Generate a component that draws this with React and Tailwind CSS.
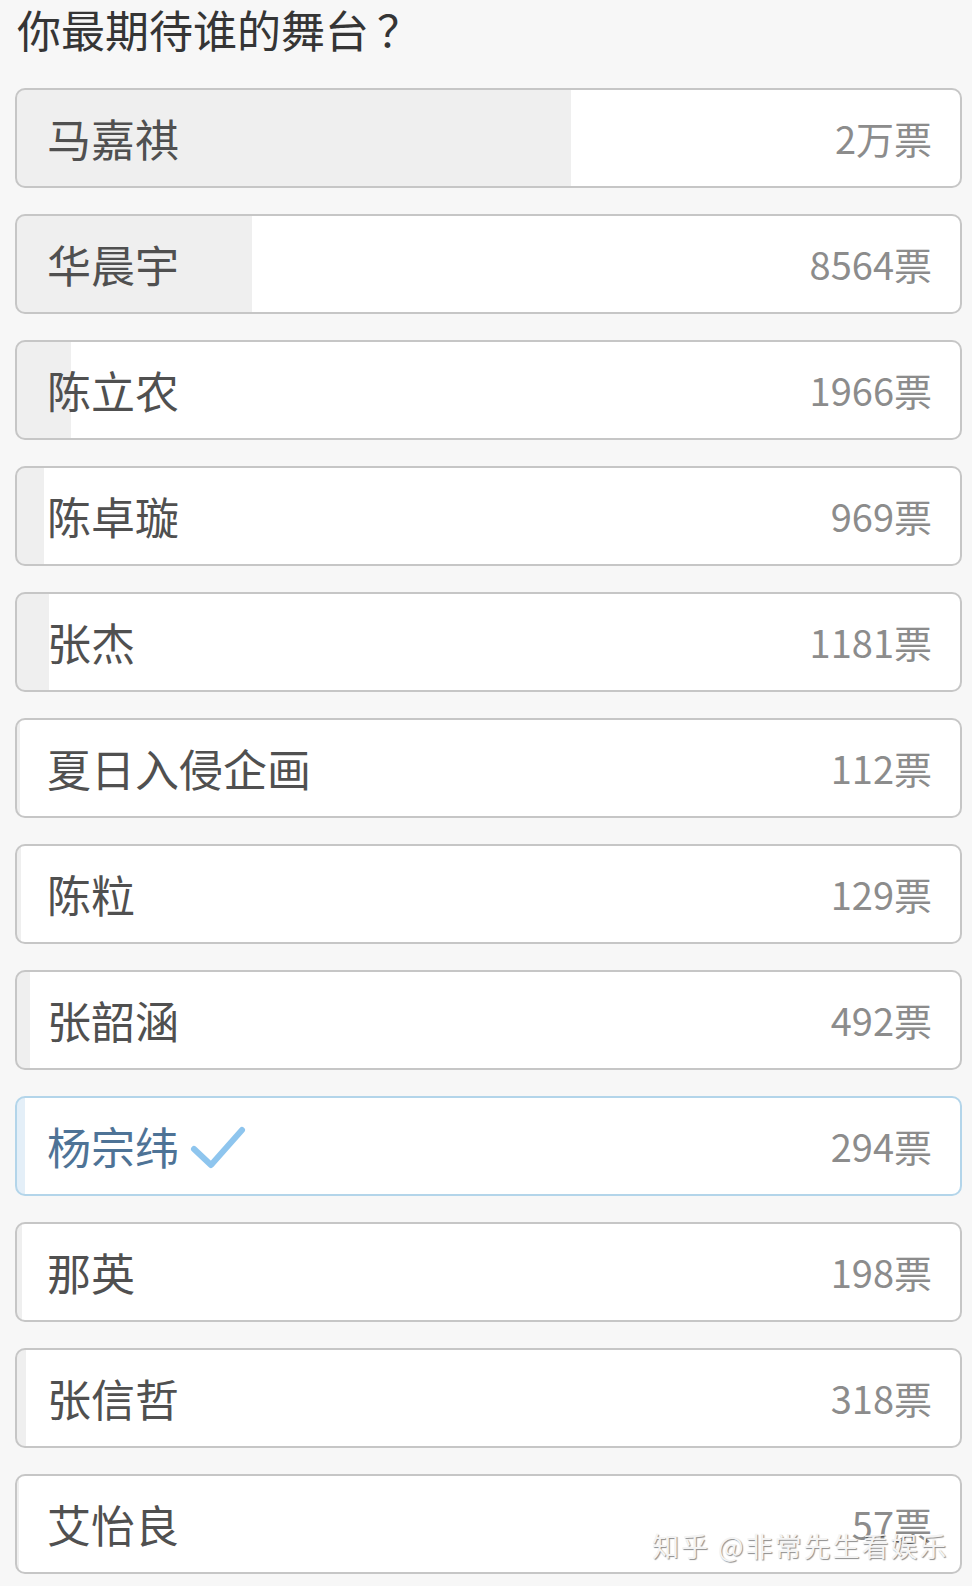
const options = [
  { name: "马嘉祺", votes: 20200, label: "2万" },
  { name: "华晨宇", votes: 8564 },
  { name: "陈立农", votes: 1966 },
  { name: "陈卓璇", votes: 969 },
  { name: "张杰", votes: 1181 },
  { name: "夏日入侵企画", votes: 112 },
  { name: "陈粒", votes: 129 },
  { name: "张韶涵", votes: 492 },
  { name: "杨宗纬", votes: 294, picked: true },
  { name: "那英", votes: 198 },
  { name: "张信哲", votes: 318 },
  { name: "艾怡良", votes: 57 },
];

const total = options.reduce((s, o) => s + o.votes, 0);

function Check() {
  return (
    <svg width="58" height="46" viewBox="0 0 58 46" className="ml-[10px] mt-[2px]">
      <polyline
        points="5,25 22,41 53,6"
        fill="none"
        stroke="#8ec5ee"
        strokeWidth="6"
        strokeLinecap="round"
        strokeLinejoin="round"
      />
    </svg>
  );
}

function Option({ o }) {
  const w = Math.round((o.votes / total) * 945);
  const fill = o.picked ? "#e4eff8" : "#efefef";
  return (
    <div
      className={
        "flex items-center justify-between h-[100px] rounded-[10px] border-2 pl-[30px] pr-[28px] " +
        (o.picked ? "border-[#b3d5ea]" : "border-[#c6c6c6]")
      }
      style={{ background: `linear-gradient(to right, ${fill} ${w}px, #ffffff ${w}px)` }}
    >
      <div className="flex items-center">
        <span className={"text-[44px] leading-none " + (o.picked ? "text-[#4e7396]" : "text-[#505050]")}>
          {o.name}
        </span>
        {o.picked && <Check />}
      </div>
      <span className="text-[38px] leading-none text-[#8c8c8c]">
        {o.label || o.votes}票
      </span>
    </div>
  );
}

export default function App() {
  return (
    <main
      className="relative min-h-[1586px] bg-[#f7f7f7] pl-[15px] pr-[10px] pt-[7px]"
      style={{ fontFamily: '"Noto Sans CJK SC", "Noto Sans", sans-serif' }}
    >
      <h1 className="text-[44px] leading-[44px] text-[#353535] pl-[2px] mb-[37px]">
        你最期待谁的舞台<span className="ml-[8px]">？</span>
      </h1>

      <div className="flex flex-col gap-[26px]">
        {options.map((o) => (
          <Option key={o.name} o={o} />
        ))}
      </div>

      {/* zhihu watermark */}
      <div className="absolute left-[652px] top-[1532px] text-[27px] leading-[27px] tracking-[2px] text-[#f4f4f4] [text-shadow:1px_1px_1px_rgba(0,0,0,0.45)]">
        知乎 @非常先生看娱乐
      </div>
    </main>
  );
}
